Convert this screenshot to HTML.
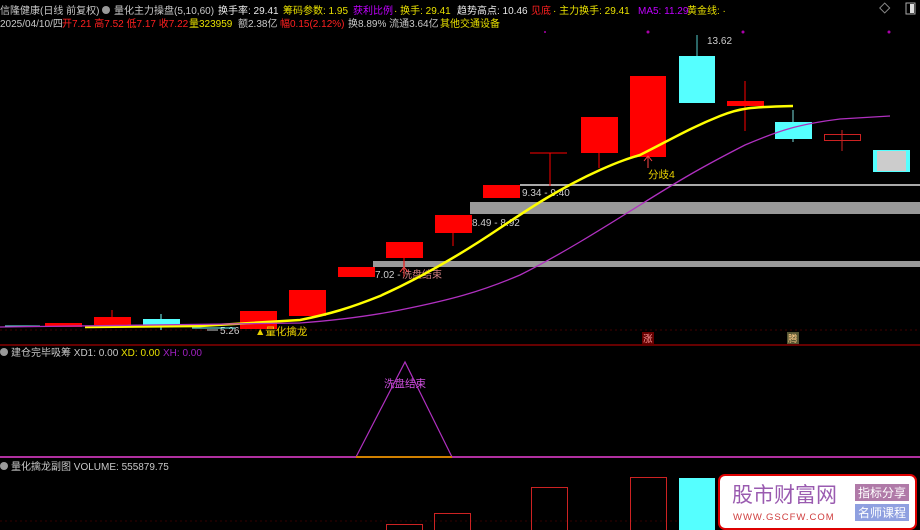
<!DOCTYPE html>
<html><head><meta charset="utf-8"><style>
html,body{margin:0;padding:0;background:#000;width:920px;height:530px;overflow:hidden}
svg{display:block}
text{font-family:"Liberation Sans","Noto Sans CJK SC",sans-serif}
</style></head><body>
<svg width="920" height="530" viewBox="0 0 920 530" xmlns="http://www.w3.org/2000/svg">
<rect width="920" height="530" fill="#000"/>
<g font-size="10">
<text x="0" y="14" fill="#c8c8c8">信隆健康(日线 前复权)</text>
<circle cx="106" cy="10" r="4" fill="#999"/>
<text x="114" y="14" fill="#c8c8c8">量化主力操盘(5,10,60)</text>
<text x="218" y="14" fill="#e8e8e8">换手率: 29.41</text>
<text x="283" y="14" fill="#e8e000">筹码参数: 1.95</text>
<text x="353" y="14" fill="#c000ff">获利比例</text>
<text x="394" y="14" fill="#e8e000">· 换手: 29.41</text>
<text x="457" y="14" fill="#e8e8e8">趋势高点: 10.46</text>
<text x="531" y="14" fill="#ff2020">见底</text>
<text x="553" y="14" fill="#e8e000">· 主力换手: 29.41</text>
<text x="638" y="14" fill="#c000ff">MA5: 11.29</text>
<text x="687" y="14" fill="#e8e000">黄金线: ·</text>
<text x="0" y="27" fill="#c8c8c8">2025/04/10/四</text>
<text x="62" y="27" fill="#ff2020">开7.21 高7.52 低7.17 收7.22</text>
<text x="189" y="27" fill="#e8e000">量323959</text>
<text x="238" y="27" fill="#c8c8c8">额2.38亿</text>
<text x="280" y="27" fill="#ff2020">幅0.15(2.12%)</text>
<text x="348" y="27" fill="#c8c8c8">换8.89% 流通3.64亿</text>
<text x="440" y="27" fill="#e8e000">其他交通设备</text>
</g>
<rect x="881" y="4" width="7" height="7" fill="none" stroke="#888" transform="rotate(45 884 8)"/>
<rect x="906" y="3" width="9" height="11" fill="none" stroke="#aaa"/><rect x="910" y="4" width="4" height="9" fill="#ddd"/>
<g fill="#a0a">
<circle cx="648" cy="32" r="1.5"/><circle cx="743" cy="32" r="1.5"/><circle cx="889" cy="32" r="1.5"/><circle cx="545" cy="32" r="1"/>
</g>
<line x1="0" y1="330" x2="920" y2="330" stroke="#400" stroke-dasharray="2 3"/>
<rect x="520" y="184" width="400" height="2" fill="#aaa"/>
<rect x="470" y="202" width="450" height="12" fill="#999"/>
<rect x="373" y="261" width="547" height="6" fill="#999"/>
<g font-size="10" fill="#ccc">
<text x="522" y="196">9.34 - 9.40</text>
<text x="472" y="226">8.49 - 8.92</text>
<text x="375" y="278">7.02 - </text>
<text x="402" y="278" fill="#d08080">洗盘结束</text>
<text x="220" y="334">5.26</text>
<text x="707" y="44">13.62</text>
</g>
<line x1="207" y1="330" x2="218" y2="330" stroke="#ccc"/>
<g>
<line x1="5" y1="326" x2="40" y2="326" stroke="#7ff"/>
<rect x="45" y="323" width="37" height="4" fill="#f00"/>
<line x1="112" y1="310" x2="112" y2="325" stroke="#f00"/>
<rect x="94" y="317" width="37" height="8" fill="#f00"/>
<line x1="161" y1="314" x2="161" y2="330" stroke="#7ff"/>
<rect x="143" y="319" width="37" height="8" fill="#5ff"/>
<line x1="192" y1="328" x2="235" y2="328" stroke="#7ff"/>
<rect x="240" y="311" width="37" height="18" fill="#f00"/>
<rect x="289" y="290" width="37" height="26" fill="#f00"/>
<rect x="338" y="267" width="37" height="10" fill="#f00"/>
<line x1="404" y1="258" x2="404" y2="268" stroke="#f00"/>
<rect x="386" y="242" width="37" height="16" fill="#f00"/>
<line x1="453" y1="230" x2="453" y2="246" stroke="#f00"/>
<rect x="435" y="215" width="37" height="18" fill="#f00"/>
<rect x="483" y="185" width="37" height="13" fill="#f00"/>
<line x1="530" y1="153" x2="567" y2="153" stroke="#f00"/>
<line x1="550" y1="153" x2="550" y2="186" stroke="#f00"/>
<line x1="599" y1="150" x2="599" y2="168" stroke="#f00"/>
<rect x="581" y="117" width="37" height="36" fill="#f00"/>
<rect x="630" y="76" width="36" height="81" fill="#f00"/>
<line x1="697" y1="35" x2="697" y2="56" stroke="#5cc"/>
<rect x="679" y="56" width="36" height="47" fill="#5ff"/>
<line x1="745" y1="81" x2="745" y2="131" stroke="#f00"/>
<rect x="727" y="101" width="37" height="5" fill="#f00"/>
<line x1="793" y1="110" x2="793" y2="142" stroke="#7dd"/>
<rect x="775" y="122" width="37" height="17" fill="#5ff"/>
<line x1="842" y1="130" x2="842" y2="151" stroke="#c22"/>
<rect x="824.5" y="134.5" width="36" height="6" fill="none" stroke="#c22"/>
<rect x="873" y="150" width="37" height="22" fill="#5ff"/>
<rect x="877" y="151" width="29" height="20" fill="#ccc"/>
</g>
<path d="M85,327 L200,326 L300,320 C330,314 350,308 380,296 C420,278 460,255 500,228 C530,208 560,188 600,170 C620,161 630,158 640,155 C670,140 690,128 720,116 C740,108 750,107 793,106" fill="none" stroke="#ff0" stroke-width="2.5"/>
<path d="M0,327 L300,323 C340,320 370,316 400,310 C450,300 480,292 520,275 C560,255 600,230 640,205 C680,180 700,168 745,145 C780,130 800,124 840,119 L890,116" fill="none" stroke="#b030c0" stroke-width="1.3"/>
<path d="M648,157 L648,168 M644,161 L648,156 L652,161" stroke="#f44" fill="none"/>
<text x="648" y="178" font-size="10.5" fill="#e8d000">分歧4</text>
<path d="M404,268 L404,277 M400,272 L404,267 L408,272" stroke="#f44" fill="none"/>
<text x="255" y="335" font-size="10.5" fill="#e8d000">▲量化擒龙</text>
<rect x="642" y="332" width="12" height="12" fill="#600"/><text x="643" y="342" font-size="9.5" fill="#f99">涨</text>
<rect x="787" y="332" width="12" height="12" fill="#553"/><text x="788" y="342" font-size="9.5" fill="#fc8">腾</text>
<line x1="0" y1="345" x2="920" y2="345" stroke="#800" stroke-width="1.5"/>
<circle cx="4" cy="352" r="4" fill="#999"/>
<text x="11" y="356" font-size="10" fill="#c8c8c8">建仓完毕吸筹 XD1: 0.00</text>
<text x="121" y="356" font-size="10" fill="#e8e000">XD: 0.00</text>
<text x="163" y="356" font-size="10" fill="#a020c0">XH: 0.00</text>
<path d="M356,457 L405,362 L452,457" fill="none" stroke="#b030c0" stroke-width="1.2"/>
<line x1="356" y1="457" x2="452" y2="457" stroke="#d08000" stroke-width="2"/>
<text x="405" y="387" font-size="10.5" fill="#d050e0" text-anchor="middle">洗盘结束</text>
<line x1="0" y1="457" x2="356" y2="457" stroke="#b030a0" stroke-width="2"/>
<line x1="452" y1="457" x2="920" y2="457" stroke="#b030a0" stroke-width="2"/>
<circle cx="4" cy="466" r="4" fill="#999"/>
<text x="11" y="470" font-size="10" fill="#c8c8c8">量化擒龙副图 VOLUME: 555879.75</text>
<line x1="0" y1="521" x2="700" y2="521" stroke="#300" stroke-dasharray="2 3"/>
<g fill="none" stroke="#c22">
<rect x="386.5" y="524.5" width="36" height="10"/>
<rect x="434.5" y="513.5" width="36" height="20"/>
<rect x="531.5" y="487.5" width="36" height="45"/>
<rect x="630.5" y="477.5" width="36" height="55"/>
</g>
<rect x="679" y="478" width="36" height="53" fill="#5ff"/>
<rect x="719" y="475" width="197" height="54" rx="6" fill="#fff" stroke="#d00" stroke-width="2"/>
<text x="732" y="502" font-size="21" fill="#9a5bb0" font-family="Noto Serif CJK SC,serif">股市财富网</text>
<text x="733" y="520" font-size="9.5" fill="#d04040" font-family="Liberation Serif,serif" letter-spacing="1">WWW.GSCFW.COM</text>
<rect x="855" y="484" width="54" height="17" fill="#b07aa8"/>
<text x="882" y="497" font-size="12" fill="#fff" text-anchor="middle">指标分享</text>
<rect x="855" y="504" width="54" height="17" fill="#8fa0e0"/>
<text x="882" y="517" font-size="12" fill="#fff" text-anchor="middle">名师课程</text>
</svg>
</body></html>
